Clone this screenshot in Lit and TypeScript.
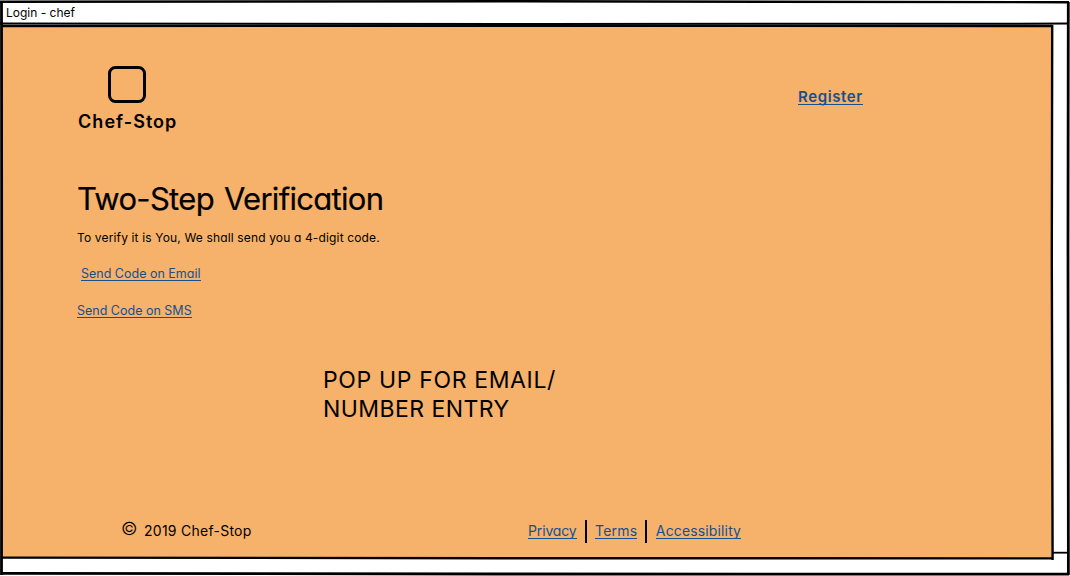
import { LitElement, html, css } from "lit";
import { customElement } from "lit/decorators.js";

@customElement("app-root")
export class AppRoot extends LitElement {
  static styles = css`
    :host {
      display: block;
      position: relative;
      box-sizing: border-box;
      width: 1070px;
      height: 576px;
      overflow: hidden;
      background: #fff;
      color: #000;
      font-family: Inter, "Open Sans", sans-serif;
      font-feature-settings: "cv11" 1, "calt" 0;
    }
    * { box-sizing: border-box; }
    .frame { position: absolute; inset: 0; pointer-events: none; }
    .window { display: flex; flex-direction: column; height: 576px; padding-left: 2px; }
    .title { height: 26px; padding: 4px 0 0 4px; font-size: 12px; line-height: 18px; white-space: nowrap; }
    .page {
      width: 1050px;
      height: 532px;
      background: #f6b16b;
      padding: 39px 0 0 75px;
      display: flex;
      flex-direction: column;
      white-space: nowrap;
    }
    .top { display: flex; height: 112px; }
    .brand { width: 721px; display: flex; flex-direction: column; }
    .logo { display: block; margin-left: 30px; }
    .name { font-size: 18px; font-weight: 600; line-height: 24px; margin: 6px 0 0 1px; letter-spacing: 1.05px; }
    a { color: #15508f; text-decoration: none; border-bottom: 1px solid #15508f; align-self: flex-start; }
    .register { font-size: 15px; font-weight: 600; line-height: 14px; margin-top: 25px; letter-spacing: 0.6px; }
    h1 { margin: 0; font-size: 31px; font-weight: 400; line-height: 44px; letter-spacing: -0.7px; word-spacing: 2px; -webkit-text-stroke: 0.2px #000; }
    p { margin: 7px 0 0; font-size: 12px; line-height: 20px; letter-spacing: 0.15px; }
    .send { font-size: 12.5px; line-height: 12px; }
    .email { margin: 20px 0 0 4px; }
    .sms { margin-top: 24px; }
    .popup { margin: 48px 0 0 246px; font-size: 23px; line-height: 29px; }
    .wide { letter-spacing: 0.64px; }
    .narrow { letter-spacing: 0.45px; }
    .footer { display: flex; margin: 96px 0 0 44px; height: 24px; font-size: 14px; }
    .copy { width: 23px; font-size: 18px; font-weight: 300; line-height: 18px; }
    .year { width: 384px; line-height: 22px; letter-spacing: 0.26px; }
    .footer a { line-height: 14px; margin-top: 4px; }
    .privacy { letter-spacing: -0.14px; }
    .terms { letter-spacing: 0.2px; }
    .access { letter-spacing: 0.14px; }
    .bar { width: 2px; height: 23px; background: #000; margin: 0 8.5px 0 8px; }
  `;

  render() {
    return html`
      <div class="window">
        <div class="title"><span>Login - chef</span></div>
        <main class="page">
          <div class="top">
            <div class="brand">
              <svg class="logo" width="40" height="39" viewBox="0 0 40 39">
                <rect x="2.5" y="2.5" width="35" height="34" rx="6" fill="none" stroke="#000" stroke-width="3" />
              </svg>
              <div class="name"><span>Chef-Stop</span></div>
            </div>
            <a class="register">Register</a>
          </div>
          <h1><span>Two-Step Verification</span></h1>
          <p><span>To verify it is You, We shall send you a 4-digit code.</span></p>
          <a class="send email">Send Code on Email</a>
          <a class="send sms">Send Code on SMS</a>
          <div class="popup"><span class="wide">POP UP FOR EMAIL/</span><br /><span class="narrow">NUMBER ENTRY</span></div>
          <div class="footer">
            <span class="copy">©</span>
            <span class="year">2019 Chef-Stop</span>
            <a class="privacy">Privacy</a>
            <i class="bar"></i>
            <a class="terms">Terms</a>
            <i class="bar"></i>
            <a class="access">Accessibility</a>
          </div>
        </main>
      </div>
      <svg class="frame" width="1070" height="576" viewBox="0 0 1070 576" fill="none" stroke="#000" stroke-width="2.4">
        <path d="M0 1.8L520 1.3L1069 2.2" />
        <path d="M0 23.5L540 23.9L1068 23.6" stroke-width="2" />
        <path d="M1 26L400 25.8L1053 26" stroke-width="2.4" />
        <path d="M1.5 1L1.7 300L1.5 575" stroke-width="2.8" />
        <path d="M1068.3 2L1068 250L1068.4 575" stroke-width="2.8" />
        <path d="M1052.2 25L1051.8 260L1052.6 560" stroke-width="2.4" />
        <path d="M1 557.6L500 558.2L1053 558.4" />
        <path d="M1 573.4L500 574L1069 574.2" stroke-width="2.8" />
        <path d="M1053 552.7H1068" stroke-width="1.8" />
      </svg>
    `;
  }
}
